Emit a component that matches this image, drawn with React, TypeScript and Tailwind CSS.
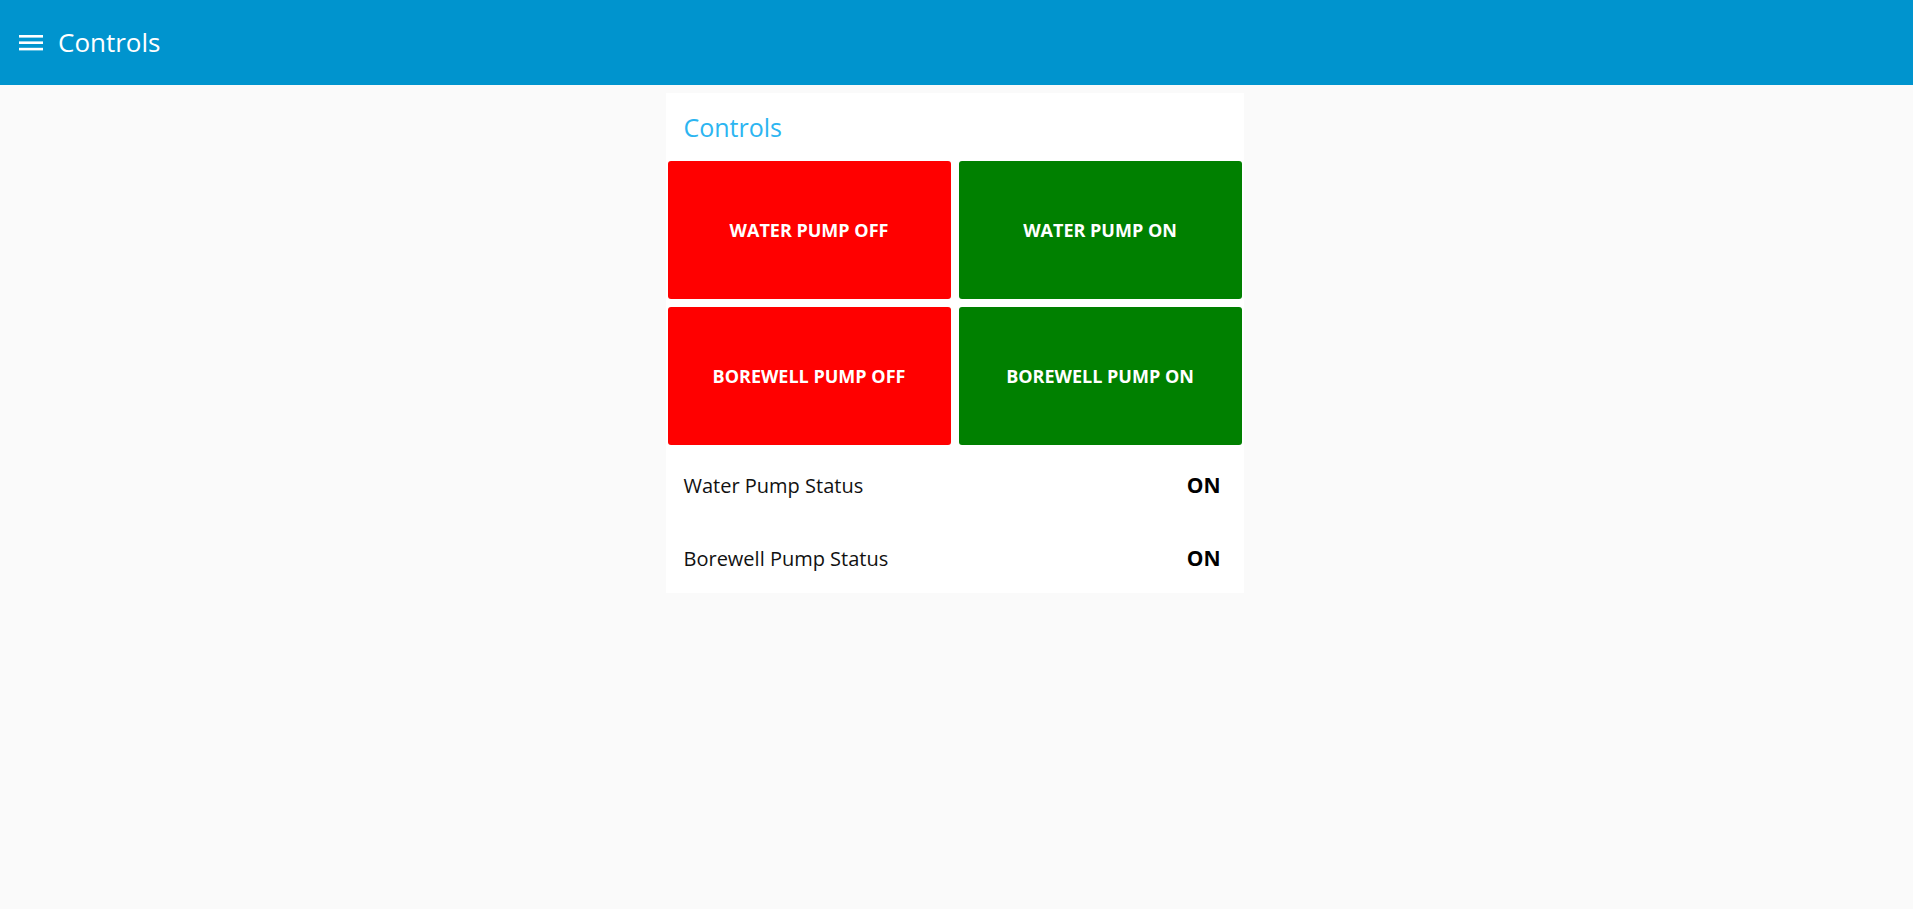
const buttons = [
  { label: 'WATER PUMP OFF', color: 'bg-[#ff0000]' },
  { label: 'WATER PUMP ON', color: 'bg-[#008000]' },
  { label: 'BOREWELL PUMP OFF', color: 'bg-[#ff0000]' },
  { label: 'BOREWELL PUMP ON', color: 'bg-[#008000]' },
];

const statuses = [
  { label: 'Water Pump Status', value: 'ON' },
  { label: 'Borewell Pump Status', value: 'ON' },
];

const MenuIcon = () => (
  <svg width="24" height="16" viewBox="0 0 24 16" className="block">
    <rect x="0" y="0" width="24" height="2.6" fill="#fff" />
    <rect x="0" y="6.4" width="24" height="2.6" fill="#fff" />
    <rect x="0" y="12.8" width="24" height="2.6" fill="#fff" />
  </svg>
);

export default function App() {
  return (
    <div className="min-h-screen bg-[#fafafa]" style={{ fontFamily: '"Open Sans", "Noto Sans", sans-serif' }}>
      <header className="h-[85px] bg-[#0094ce] flex items-center pl-[19px]">
        <MenuIcon />
        <h1 className="ml-[15px] text-[26px] text-white font-normal leading-none -mt-[1px]">Controls</h1>
      </header>

      <div className="flex justify-center pr-[4px] pt-[8px]">
        <div className="w-[578px] bg-white">
          <div className="h-[68px] flex items-center pl-[18px]">
            <h2 className="text-[25px] text-[#2cb5f1] font-medium leading-none">Controls</h2>
          </div>

          <div className="grid grid-cols-2 gap-[8px] px-[2px]">
            {buttons.map((btn) => (
              <button
                key={btn.label}
                className={`${btn.color} h-[138px] rounded-[3px] text-white text-[18px] font-bold flex items-center justify-center`}
              >
                {btn.label}
              </button>
            ))}
          </div>

          <div className="pt-[7px] flex flex-col gap-[5px]">
            {statuses.map((s) => (
              <div key={s.label} className="h-[68px] flex items-center justify-between pl-[18px] pr-[23px]">
                <span className="text-[20px] text-[#111]">{s.label}</span>
                <span className="text-[21px] font-bold text-black">{s.value}</span>
              </div>
            ))}
          </div>
        </div>
      </div>
    </div>
  );
}
